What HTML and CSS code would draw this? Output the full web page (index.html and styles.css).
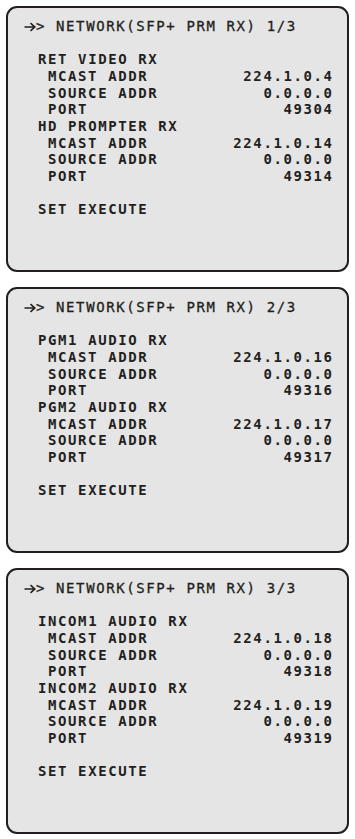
FILE: index.html
```html
<!DOCTYPE html>
<html lang="en">
<head>
    <meta charset="UTF-8">
    <meta name="viewport" content="width=device-width, initial-scale=1.0">
    <title>Network SFP+ PRM RX</title>
    <link rel="stylesheet" href="styles.css">
</head>
<body>
    <div class="screens">
        <!-- Page 1 -->
        <div class="screen">
            <div class="title"><svg class="arrow" width="12" height="10" viewBox="0 0 12 10"><path d="M0.5 5H10.5M6.5 1.2L10.8 5L6.5 8.8" fill="none" stroke="#231f20" stroke-width="1.6"/></svg><span>&gt; NETWORK(SFP+ PRM RX) 1/3</span></div>
            <div class="blank"></div>
            <div class="group">RET VIDEO RX</div>
            <div class="item"><span>MCAST ADDR</span><span>224.1.0.4</span></div>
            <div class="item"><span>SOURCE ADDR</span><span>0.0.0.0</span></div>
            <div class="item"><span>PORT</span><span>49304</span></div>
            <div class="group">HD PROMPTER RX</div>
            <div class="item"><span>MCAST ADDR</span><span>224.1.0.14</span></div>
            <div class="item"><span>SOURCE ADDR</span><span>0.0.0.0</span></div>
            <div class="item"><span>PORT</span><span>49314</span></div>
            <div class="blank"></div>
            <div class="group">SET EXECUTE</div>
        </div>

        <!-- Page 2 -->
        <div class="screen">
            <div class="title"><svg class="arrow" width="12" height="10" viewBox="0 0 12 10"><path d="M0.5 5H10.5M6.5 1.2L10.8 5L6.5 8.8" fill="none" stroke="#231f20" stroke-width="1.6"/></svg><span>&gt; NETWORK(SFP+ PRM RX) 2/3</span></div>
            <div class="blank"></div>
            <div class="group">PGM1 AUDIO RX</div>
            <div class="item"><span>MCAST ADDR</span><span>224.1.0.16</span></div>
            <div class="item"><span>SOURCE ADDR</span><span>0.0.0.0</span></div>
            <div class="item"><span>PORT</span><span>49316</span></div>
            <div class="group">PGM2 AUDIO RX</div>
            <div class="item"><span>MCAST ADDR</span><span>224.1.0.17</span></div>
            <div class="item"><span>SOURCE ADDR</span><span>0.0.0.0</span></div>
            <div class="item"><span>PORT</span><span>49317</span></div>
            <div class="blank"></div>
            <div class="group">SET EXECUTE</div>
        </div>

        <!-- Page 3 -->
        <div class="screen">
            <div class="title"><svg class="arrow" width="12" height="10" viewBox="0 0 12 10"><path d="M0.5 5H10.5M6.5 1.2L10.8 5L6.5 8.8" fill="none" stroke="#231f20" stroke-width="1.6"/></svg><span>&gt; NETWORK(SFP+ PRM RX) 3/3</span></div>
            <div class="blank"></div>
            <div class="group">INCOM1 AUDIO RX</div>
            <div class="item"><span>MCAST ADDR</span><span>224.1.0.18</span></div>
            <div class="item"><span>SOURCE ADDR</span><span>0.0.0.0</span></div>
            <div class="item"><span>PORT</span><span>49318</span></div>
            <div class="group">INCOM2 AUDIO RX</div>
            <div class="item"><span>MCAST ADDR</span><span>224.1.0.19</span></div>
            <div class="item"><span>SOURCE ADDR</span><span>0.0.0.0</span></div>
            <div class="item"><span>PORT</span><span>49319</span></div>
            <div class="blank"></div>
            <div class="group">SET EXECUTE</div>
        </div>
    </div>
</body>
</html>
```

FILE: styles.css
```css
* {
    margin: 0;
    padding: 0;
    box-sizing: border-box;
}

body {
    background: #fff;
    font-family: 'DejaVu Sans Mono', monospace;
    font-weight: bold;
    font-size: 14px;
    color: #231f20;
}

.screens {
    display: flex;
    flex-direction: column;
    gap: 15px;
    padding: 6px 6px 0 6px;
}

.screen {
    height: 266px;
    background: #e5e5e5;
    border: 2px solid #231f20;
    border-radius: 11px;
    padding: 10px 15px 0 16px;
}

.title,
.blank,
.group,
.item {
    height: 16.67px;
    line-height: 16.67px;
    white-space: pre;
    letter-spacing: 1.6px;
}

.title {
    display: flex;
    align-items: center;
    font-weight: normal;
    -webkit-text-stroke: 0.3px #231f20;
}

.arrow {
    flex-shrink: 0;
    margin-top: 1px;
}

.group {
    padding-left: 14px;
}

.item {
    display: flex;
    justify-content: space-between;
    padding-left: 24px;
    margin-right: -1.6px;
}
```
